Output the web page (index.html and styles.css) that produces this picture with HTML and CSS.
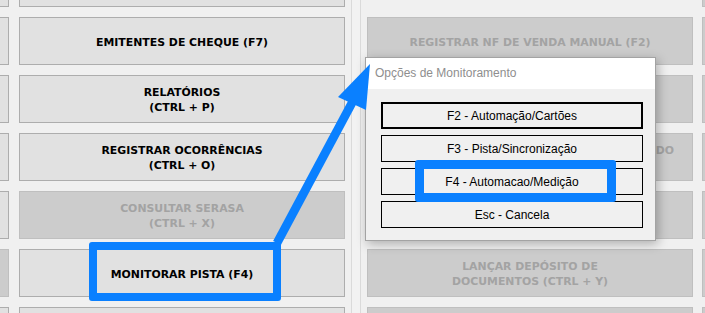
FILE: index.html
```html
<!DOCTYPE html>
<html lang="pt-BR">
<head>
<meta charset="utf-8">
<title>Monitorar Pista</title>
<link rel="stylesheet" href="styles.css">
</head>
<body>
<div class="screen">
  <div class="cols">
    <div class="col part part-left">
      <div class="btn"></div>
      <div class="btn"></div>
      <div class="btn"></div>
      <div class="btn"></div>
      <div class="btn"></div>
      <div class="btn off"></div>
      <div class="btn"></div>
    </div>
    <div class="col main">
      <div class="btn"></div>
      <div class="btn">EMITENTES DE CHEQUE (F7)</div>
      <div class="btn">RELATÓRIOS<br>(CTRL + P)</div>
      <div class="btn">REGISTRAR OCORRÊNCIAS<br>(CTRL + O)</div>
      <div class="btn off">CONSULTAR SERASA<br>(CTRL + X)</div>
      <div class="btn">MONITORAR PISTA (F4)</div>
      <div class="btn"></div>
    </div>
    <div class="sep"><div class="sep-line"></div></div>
    <div class="col main">
      <div class="btn empty"></div>
      <div class="btn off">REGISTRAR NF DE VENDA MANUAL (F2)</div>
      <div class="btn off"></div>
      <div class="btn off tail">ADO</div>
      <div class="btn off"></div>
      <div class="btn off">LANÇAR DEPÓSITO DE<br>DOCUMENTOS (CTRL + Y)</div>
      <div class="btn off"></div>
    </div>
    <div class="col part part-right">
      <div class="btn off"></div>
      <div class="btn off"></div>
      <div class="btn off"></div>
      <div class="btn off"></div>
      <div class="btn off"></div>
      <div class="btn off"></div>
      <div class="btn off"></div>
    </div>
  </div>

  <div class="dialog">
    <div class="dialog-title">Opções de Monitoramento</div>
    <div class="dialog-body">
      <div class="dbtn focus">F2 - Automação/Cartões</div>
      <div class="dbtn">F3 - Pista/Sincronização</div>
      <div class="dbtn">F4 - Automacao/Medição</div>
      <div class="dbtn">Esc - Cancela</div>
    </div>
  </div>

  <div class="hl hl-pista"></div>
  <div class="hl hl-f4"></div>

  <svg class="arrow" width="705" height="313" viewBox="0 0 705 313" xmlns="http://www.w3.org/2000/svg">
    <line x1="277" y1="243" x2="353" y2="101" stroke="#0a80ff" stroke-width="8.8"/>
    <polygon points="370,64 338,97 366,110" fill="#0a80ff"/>
  </svg>
</div>
</body>
</html>
```
FILE: styles.css
```css
html, body {
  margin: 0;
  padding: 0;
  background: #f0f0f0;
}

.screen {
  position: relative;
  width: 705px;
  height: 313px;
  overflow: hidden;
  background: #f0f0f0;
}

.cols {
  display: flex;
  margin-left: -20px;
  margin-top: -41px;
}

.col {
  display: flex;
  flex-direction: column;
  gap: 10px;
  flex: none;
}

.part-left {
  width: 29px;
  margin-right: 10px;
}

.part-right {
  width: 40px;
  margin-left: 9px;
}

.main {
  width: 326px;
}

.sep {
  flex: none;
  width: 22px;
  padding-left: 6px;
  box-sizing: border-box;
}

.sep-line {
  width: 10px;
  height: 400px;
  box-sizing: border-box;
  border-left: 1px solid #dadada;
  border-right: 1px solid #dadada;
  background: #f2f2f2;
}

.btn {
  height: 48px;
  box-sizing: border-box;
  border: 1px solid #adadad;
  background: #e1e1e1;
  display: flex;
  align-items: center;
  justify-content: center;
  text-align: center;
  padding-top: 2px;
  font-family: "DejaVu Sans", Verdana, sans-serif;
  font-weight: bold;
  font-size: 10.9px;
  line-height: 15px;
  color: #000;
  white-space: nowrap;
}

.btn.off {
  background: #cccccc;
  border-color: #bfbfbf;
  color: #a3a3a3;
}

.btn.tail {
  justify-content: flex-end;
  align-items: flex-start;
  padding: 9px 18px 0 0;
}

.btn.empty {
  visibility: hidden;
}

.dialog {
  position: absolute;
  left: 365px;
  top: 57px;
  width: 291px;
  height: 184px;
  box-sizing: border-box;
  border: 1px solid #a3a3a3;
  background: #f0f0f0;
  box-shadow: 2px 3px 10px rgba(0, 0, 0, 0.28);
  font-family: "Liberation Sans", Arial, sans-serif;
  font-size: 12px;
}

.dialog-title {
  height: 31px;
  background: #ffffff;
  color: #8e8e8e;
  padding-left: 9px;
  line-height: 31px;
}

.dialog-body {
  display: flex;
  flex-direction: column;
  gap: 6px;
  padding: 13px 0 0 15px;
}

.dbtn {
  width: 262px;
  height: 27px;
  box-sizing: border-box;
  border: 1px solid #000;
  background: #f0f0f0;
  color: #000;
  display: flex;
  align-items: center;
  justify-content: center;
  padding-top: 1px;
}

.dbtn.focus {
  border-width: 2px;
}

.hl {
  position: absolute;
  box-sizing: border-box;
  border-style: solid;
  border-color: #0a80ff;
  border-radius: 3px;
}

.hl-pista {
  left: 89px;
  top: 242px;
  width: 192px;
  height: 59px;
  border-width: 8px;
}

.hl-f4 {
  left: 415px;
  top: 160px;
  width: 201px;
  height: 42px;
  border-width: 9px;
}

.arrow {
  position: absolute;
  left: 0;
  top: 0;
  pointer-events: none;
}
```
